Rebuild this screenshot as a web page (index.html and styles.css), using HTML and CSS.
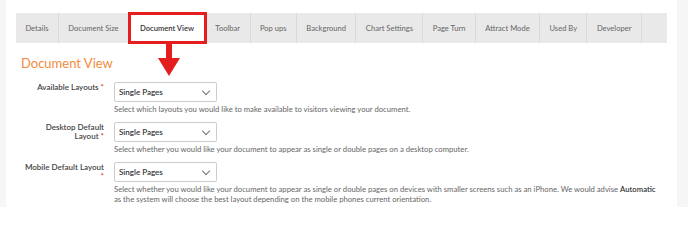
FILE: index.html
```html
<!DOCTYPE html>
<html>
<head>
   <title>Document View</title>
   <link rel="stylesheet" href="styles.css">
</head>
<body>
   <div class="page">
       <div class="panel">
           <div class="tabs">
               <div class="tab">Details</div>
               <div class="tab">Document Size</div>
               <div class="tab active">Document View</div>
               <div class="tab">Toolbar</div>
               <div class="tab">Pop ups</div>
               <div class="tab">Background</div>
               <div class="tab">Chart Settings</div>
               <div class="tab">Page Turn</div>
               <div class="tab">Attract Mode</div>
               <div class="tab">Used By</div>
               <div class="tab">Developer</div>
           </div>

           <h2 class="section-title">Document View</h2>

           <div class="form-row">
               <label class="form-label">Available Layouts <span class="req">*</span></label>
               <div class="form-field">
                   <div class="select">Single Pages<span class="chevron"></span></div>
                   <p class="help">Select which layouts you would like to make available to visitors viewing your document.</p>
               </div>
           </div>
           <div class="form-row">
               <label class="form-label">Desktop Default Layout <span class="req">*</span></label>
               <div class="form-field">
                   <div class="select">Single Pages<span class="chevron"></span></div>
                   <p class="help">Select whether you would like your document to appear as single or double pages on a desktop computer.</p>
               </div>
           </div>
           <div class="form-row">
               <label class="form-label">Mobile Default Layout <span class="req">*</span></label>
               <div class="form-field">
                   <div class="select">Single Pages<span class="chevron"></span></div>
                   <p class="help">Select whether you would like your document to appear as single or double pages on devices with smaller screens such as an iPhone. We would advise <b>Automatic</b> as the system will choose the best layout depending on the mobile phones current orientation.</p>
               </div>
           </div>
       </div>
   </div>

   <!-- annotation arrows -->
   <svg class="arrows" width="688" height="246" viewBox="0 0 688 246">
       <rect x="166" y="44" width="6" height="15" fill="#e41e1e"/>
       <polygon points="158,58 180,58 169,76" fill="#e41e1e"/>
       <polygon points="157,233 178,233 167.5,215" fill="#e41e1e"/>
       <rect x="165" y="232" width="6" height="14" fill="#e41e1e"/>
   </svg>
</body>
</html>
```

FILE: styles.css
```css
body {
    margin: 0;
    background: white;
    font-family: Lato, "Open Sans", Arial, sans-serif;
    position: relative;
}
.page {
    background-color: #f6f6f6;
    padding: 0 11px 0 6px;
}
.panel {
    background: white;
    padding: 13px 10px 0 10px;
    height: 194px;
}
.tabs {
    display: flex;
    background-color: #e9e9e9;
    height: 30px;
}
.tab {
    flex: none;
    display: flex;
    align-items: center;
    padding: 0 9.4px;
    font-size: 7.6px;
    white-space: nowrap;
    color: #666;
    border-right: 1px solid #d9d9d9;
}
.tab.active {
    background: white;
    color: #333;
    font-weight: 600;
    padding: 0 11px;
    outline: 3px solid #e41e1e;
    outline-offset: -2px;
    position: relative;
}
.section-title {
    margin: 12px 0 11px 5px;
    font-size: 13px;
    font-weight: 400;
    color: #f28a3b;
}
.form-row {
    display: flex;
    align-items: flex-start;
    margin-bottom: 8px;
}
.form-label {
    flex: none;
    width: 80px;
    padding: 1px 10px 0 8px;
    text-align: right;
    font-size: 8px;
    font-weight: 600;
    color: #444;
    line-height: 9px;
}
.req {
    color: #e03030;
}
.form-field {
    flex: 1;
}
.select {
    position: relative;
    width: 97px;
    height: 18px;
    line-height: 18px;
    padding-left: 4px;
    border: 1px solid #ccc;
    border-radius: 2px;
    font-size: 8px;
    font-weight: 600;
    color: #333;
}
.chevron {
    position: absolute;
    right: 7px;
    top: 5px;
    width: 5px;
    height: 5px;
    border-right: 1px solid #777;
    border-bottom: 1px solid #777;
    transform: rotate(45deg);
}
.help {
    margin: 2px 0 0 0;
    font-size: 7.7px;
    line-height: 10px;
    color: #666;
    max-width: 545px;
}
.help b {
    color: #333;
    font-weight: 600;
}
.arrows {
    position: absolute;
    left: 0;
    top: 0;
    pointer-events: none;
}
```
